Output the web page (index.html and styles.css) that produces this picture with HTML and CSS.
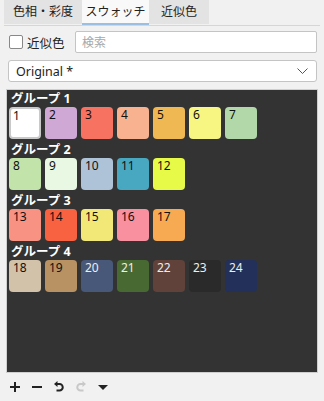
FILE: index.html
```html
<!DOCTYPE html>
<html lang="ja">
<head>
    <meta charset="UTF-8">
    <meta name="viewport" content="width=device-width, initial-scale=1.0">
    <title>スウォッチ</title>
    <link rel="stylesheet" href="styles.css">
</head>
<body>
    <!-- Tabs -->
    <div class="tabs">
        <div class="tab tab-hue">色相・彩度</div>
        <div class="tab tab-swatch active">スウォッチ</div>
        <div class="tab tab-near">近似色</div>
    </div>

    <!-- Filter row -->
    <div class="filter-row">
        <label class="check"><span class="box"></span>近似色</label>
        <input type="text" class="search" placeholder="検索">
    </div>

    <div class="select">
        <span>Original *</span>
        <svg width="11" height="7" viewBox="0 0 11 7"><path d="M0.5 0.5 L5.5 5.5 L10.5 0.5" fill="none" stroke="#555" stroke-width="1"/></svg>
    </div>

    <!-- Swatch panel -->
    <div class="panel" id="panel"></div>

    <!-- Toolbar -->
    <div class="toolbar">
        <svg width="12" height="12" viewBox="0 0 12 12"><path d="M6 1 V11 M1 6 H11" stroke="#222" stroke-width="2"/></svg>
        <svg width="12" height="12" viewBox="0 0 12 12"><path d="M1 6 H11" stroke="#222" stroke-width="2"/></svg>
        <svg width="12" height="12" viewBox="0 0 12 12"><path d="M4 3 H6.5 A3 3 0 0 1 6.5 9.5 H3.5" fill="none" stroke="#222" stroke-width="2"/><path d="M1 3 L4.5 0 V6 Z" fill="#222"/></svg>
        <svg width="12" height="12" viewBox="0 0 12 12"><path d="M8 3 H5.5 A3 3 0 0 0 5.5 9.5 H8.5" fill="none" stroke="#c8c8c8" stroke-width="2"/><path d="M11 3 L7.5 0 V6 Z" fill="#c8c8c8"/></svg>
        <svg width="12" height="12" viewBox="0 0 12 12"><path d="M1 4 H11 L6 9 Z" fill="#222"/></svg>
    </div>

    <script>
        // Swatch groups
        const groups = [
            ['グループ 1', ['#ffffff', '#d0a8d6', '#f87262', '#f9b290', '#f0b852', '#f8f682', '#b2d8aa']],
            ['グループ 2', ['#c2e4aa', '#e8f8e2', '#aec2d8', '#48a8c2', '#e8fa48']],
            ['グループ 3', ['#f89282', '#f86240', '#f2e878', '#f890a0', '#f8aa52']],
            ['グループ 4', ['#d2c2aa', '#b89262', '#485878', '#486a32', '#60423a', '#2a2a2a', '#22305a']]
        ];
        const dark = ['#485878', '#486a32', '#60423a', '#2a2a2a', '#22305a'];

        let n = 1;
        const html = groups.map(([name, colors]) => {
            const items = colors.map(c => {
                const cls = 'swatch' + (n === 1 ? ' selected' : '') + (dark.includes(c) ? ' light-text' : '');
                return `<div class="${cls}" style="background:${c}">${n++}</div>`;
            }).join('');
            return `<div class="group"><div class="group-title">${name}</div><div class="swatches">${items}</div></div>`;
        }).join('');
        document.getElementById('panel').innerHTML = html;
    </script>
</body>
</html>
```

FILE: styles.css
```css
body {
    margin: 0;
    padding: 0;
    background-color: #f1f1f1;
    font-family: "Noto Sans", "Noto Sans CJK JP", sans-serif;
    font-size: 12px;
    color: #222;
    width: 324px;
}

.tabs {
    display: flex;
    margin: 0 4px;
    height: 25px;
    border-bottom: 1px solid #d6d6d6;
}

.tab {
    height: 24px;
    line-height: 23px;
    text-align: center;
    background-color: #e3e3e3;
    font-size: 12px;
    box-sizing: border-box;
}

.tab-hue {
    width: 78px;
}

.tab-swatch {
    width: 67px;
}

.tab-near {
    width: 60px;
}

.tab.active {
    background-color: #f9f9f9;
    border-bottom: 2px solid #9bbfe3;
    height: 25px;
}

.filter-row {
    display: flex;
    align-items: center;
    margin: 5px 7px 0 9px;
    height: 22px;
}

.check {
    display: flex;
    align-items: center;
    width: 66px;
    font-size: 12.5px;
}

.check .box {
    width: 12px;
    height: 12px;
    border: 1px solid #888;
    border-radius: 2px;
    background-color: #fff;
    margin-right: 4px;
}

.search {
    flex: 1;
    height: 22px;
    box-sizing: border-box;
    border: 1px solid #c4c4c4;
    border-radius: 2px;
    padding: 0 6px;
    font-family: inherit;
    font-size: 12px;
    background-color: #fff;
}

.search::placeholder {
    color: #a8a8a8;
}

.select {
    display: flex;
    align-items: center;
    justify-content: space-between;
    margin: 7px 7px 0 8px;
    height: 22px;
    box-sizing: border-box;
    border: 1px solid #c4c4c4;
    border-radius: 3px;
    background-color: #fff;
    padding: 0 8px 0 7px;
    font-size: 12.5px;
}

.panel {
    margin: 7px 6px 0 6px;
    height: 284px;
    box-sizing: border-box;
    border: 1px solid #cfcfcf;
    background-color: #333;
    padding: 0 2px;
}

.group {
    margin-bottom: 2px;
}

.group-title {
    height: 17px;
    line-height: 17px;
    padding-left: 2px;
    color: #fff;
    font-weight: bold;
    font-size: 12.5px;
}

.swatches {
    display: flex;
    gap: 4px;
}

.swatch {
    width: 32px;
    height: 32px;
    box-sizing: border-box;
    border-radius: 4px;
    padding: 1px 4px;
    line-height: 14px;
    font-size: 12px;
    color: #111;
}

.swatch.selected {
    border: 2px solid #c9c9c9;
    padding: 0 2px;
    box-shadow: inset 0 0 0 1px #fff;
}

.swatch.light-text {
    color: #eee;
}

.toolbar {
    display: flex;
    align-items: center;
    gap: 10px;
    padding: 8px 0 0 9px;
}
```
